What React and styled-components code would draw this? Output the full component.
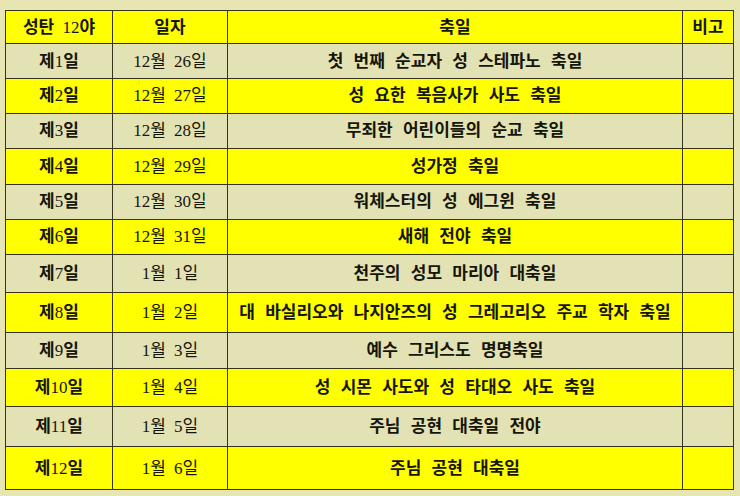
import React from "react";
import styled, { createGlobalStyle } from "styled-components";

const Global = createGlobalStyle`
  html, body { margin: 0; padding: 0; background: #e7e6b3; }
  body { width: 740px; height: 496px; overflow: hidden; }
`;

const Page = styled.div`
  padding: 10px 0 0 5px;
`;

const Table = styled.table`
  border-collapse: collapse;
  table-layout: fixed;
  width: 728px;
  font-family: "Liberation Serif", "Noto Sans CJK KR", serif;
  font-size: 17px;
  color: #161608;
`;

const Row = styled.tr`
  background: ${(p) => (p.$yellow ? "#ffff00" : "#e3e2b4")};
  height: ${(p) => p.$h}px;
`;

const Cell = styled.td`
  border: 1.5px solid #36351c;
  padding: 0;
  text-align: center;
  vertical-align: middle;
  white-space: nowrap;
  font-weight: ${(p) => (p.$bold ? 700 : 400)};
  word-spacing: ${(p) => (p.$wide ? 6 : 4)}px;
  line-height: 1;
`;

const HeadCell = styled(Cell).attrs({ as: "th" })`
  font-weight: 700;
`;

const Num = styled.span`
  font-weight: 400;
  font-family: "Liberation Serif", serif;
`;

const withNums = (s) =>
  s.split(/(\d+)/).map((part, i) =>
    /^\d+$/.test(part) ? <Num key={i}>{part}</Num> : <React.Fragment key={i}>{part}</React.Fragment>
  );

const rows = [
  ["제1일", "12월 26일", "첫 번째 순교자 성 스테파노 축일", 35],
  ["제2일", "12월 27일", "성 요한 복음사가 사도 축일", 34.5],
  ["제3일", "12월 28일", "무죄한 어린이들의 순교 축일", 35.5],
  ["제4일", "12월 29일", "성가정 축일", 35.5],
  ["제5일", "12월 30일", "워체스터의 성 에그윈 축일", 35],
  ["제6일", "12월 31일", "새해 전야 축일", 35],
  ["제7일", "1월 1일", "천주의 성모 마리아 대축일", 38.5],
  ["제8일", "1월 2일", "대 바실리오와 나지안즈의 성 그레고리오 주교 학자 축일", 40],
  ["제9일", "1월 3일", "예수 그리스도 명명축일", 36],
  ["제10일", "1월 4일", "성 시몬 사도와 성 타대오 사도 축일", 38],
  ["제11일", "1월 5일", "주님 공현 대축일 전야", 40],
  ["제12일", "1월 6일", "주님 공현 대축일", 43],
];

export default function App() {
  return (
    <>
      <Global />
      <Page>
        <Table>
          <colgroup>
            <col style={{ width: 107 }} />
            <col style={{ width: 115 }} />
            <col style={{ width: 455 }} />
            <col style={{ width: 51 }} />
          </colgroup>
          <thead>
            <Row $yellow $h={33}>
              <HeadCell>{withNums("성탄 12야")}</HeadCell>
              <HeadCell>일자</HeadCell>
              <HeadCell>축일</HeadCell>
              <HeadCell>비고</HeadCell>
            </Row>
          </thead>
          <tbody>
            {rows.map(([day, date, feast, h], i) => (
              <Row key={day} $yellow={i % 2 === 1} $h={h}>
                <Cell $bold>{withNums(day)}</Cell>
                <Cell>{date}</Cell>
                <Cell $bold $wide>{feast}</Cell>
                <Cell />
              </Row>
            ))}
          </tbody>
        </Table>
      </Page>
    </>
  );
}
